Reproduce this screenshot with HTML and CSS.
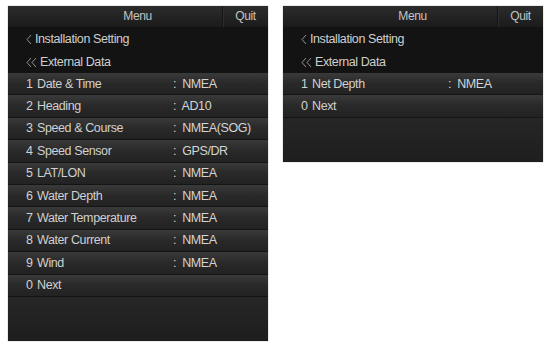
FILE: index.html
```html
<html>
<head><title>External Data</title>
<meta content="text/html;charset=utf-8" http-equiv="Content-Type" />
<link rel="stylesheet" href="styles.css">
</head>
<body>
<div class="screens">

	<div class="panel tall">
		<div class="head">
			<div class="title">Menu</div>
			<div class="quit">Quit</div>
		</div>
		<div class="nav"><svg class="chev" width="6" height="11" viewBox="0 0 6 11"><polyline points="5,1 1,5.5 5,10"/></svg>Installation Setting</div>
		<div class="nav"><svg class="chev" width="11" height="11" viewBox="0 0 11 11"><polyline points="5,1 1,5.5 5,10"/><polyline points="10,1 6,5.5 10,10"/></svg>External Data</div>
		<div class="list">
			<div class="row"><span class="num">1</span><span class="label">Date &amp; Time</span><span class="value">:&nbsp; NMEA</span></div>
			<div class="row"><span class="num">2</span><span class="label">Heading</span><span class="value">:&nbsp; AD10</span></div>
			<div class="row"><span class="num">3</span><span class="label">Speed &amp; Course</span><span class="value">:&nbsp; NMEA(SOG)</span></div>
			<div class="row"><span class="num">4</span><span class="label">Speed Sensor</span><span class="value">:&nbsp; GPS/DR</span></div>
			<div class="row"><span class="num">5</span><span class="label">LAT/LON</span><span class="value">:&nbsp; NMEA</span></div>
			<div class="row"><span class="num">6</span><span class="label">Water Depth</span><span class="value">:&nbsp; NMEA</span></div>
			<div class="row"><span class="num">7</span><span class="label">Water Temperature</span><span class="value">:&nbsp; NMEA</span></div>
			<div class="row"><span class="num">8</span><span class="label">Water Current</span><span class="value">:&nbsp; NMEA</span></div>
			<div class="row"><span class="num">9</span><span class="label">Wind</span><span class="value">:&nbsp; NMEA</span></div>
			<div class="row"><span class="num">0</span><span class="label">Next</span></div>
		</div>
		<div class="blank"></div>
	</div>

	<div class="panel short">
		<div class="head">
			<div class="title">Menu</div>
			<div class="quit">Quit</div>
		</div>
		<div class="nav"><svg class="chev" width="6" height="11" viewBox="0 0 6 11"><polyline points="5,1 1,5.5 5,10"/></svg>Installation Setting</div>
		<div class="nav"><svg class="chev" width="11" height="11" viewBox="0 0 11 11"><polyline points="5,1 1,5.5 5,10"/><polyline points="10,1 6,5.5 10,10"/></svg>External Data</div>
		<div class="list">
			<div class="row"><span class="num">1</span><span class="label">Net Depth</span><span class="value">:&nbsp; NMEA</span></div>
			<div class="row"><span class="num">0</span><span class="label">Next</span></div>
		</div>
		<div class="blank"></div>
	</div>

</div>
</body>
</html>
```

FILE: styles.css
```css
body{
	margin:0;
	padding:0;
	background-color:#fff;
	font-family: "Liberation Sans", Arial, sans-serif;
	font-size:12px;
	letter-spacing:-0.4px;
	color:#d0d0d0;
}

.screens{
	display:flex;
	gap:15px;
	padding:6px 0 0 8px;
	align-items:flex-start;
}

.panel{
	width:260px;
	display:flex;
	flex-direction:column;
	background-color:#1c1c1c;
	box-shadow:0 0 1px #888;
}

.tall{
	height:335px;
}

.short{
	height:156px;
}

.head{
	display:flex;
	height:21px;
	background:linear-gradient(#2c2c2c, #1b1b1b);
	color:#c4c4c4;
}

.title{
	flex:1;
	padding-left:45px;
	text-align:center;
	line-height:21px;
}

.quit{
	width:45px;
	text-align:center;
	line-height:21px;
	border-left:1px solid #141414;
	box-shadow:inset 1px 0 0 #2e2e2e;
}

.nav{
	height:23px;
	display:flex;
	align-items:center;
	padding-left:18px;
	background-color:#131313;
	color:#cfcfcf;
	font-size:12.5px;
}

.chev{
	margin-right:3px;
	margin-top:1px;
}

.chev polyline{
	fill:none;
	stroke:#a0a0a0;
	stroke-width:0.9;
}

.row{
	height:22.4px;
	box-sizing:border-box;
	display:flex;
	align-items:center;
	padding-left:18px;
	background:linear-gradient(#3a3a3a, #2a2a2a 45%, #222);
	border-bottom:1px solid #141414;
	font-size:12.5px;
}

.num{
	width:11px;
}

.label{
	width:136px;
}

.value{
	color:#d4d4d4;
}

.blank{
	flex:1;
	background:linear-gradient(#262626, #1e1e1e);
}
```
